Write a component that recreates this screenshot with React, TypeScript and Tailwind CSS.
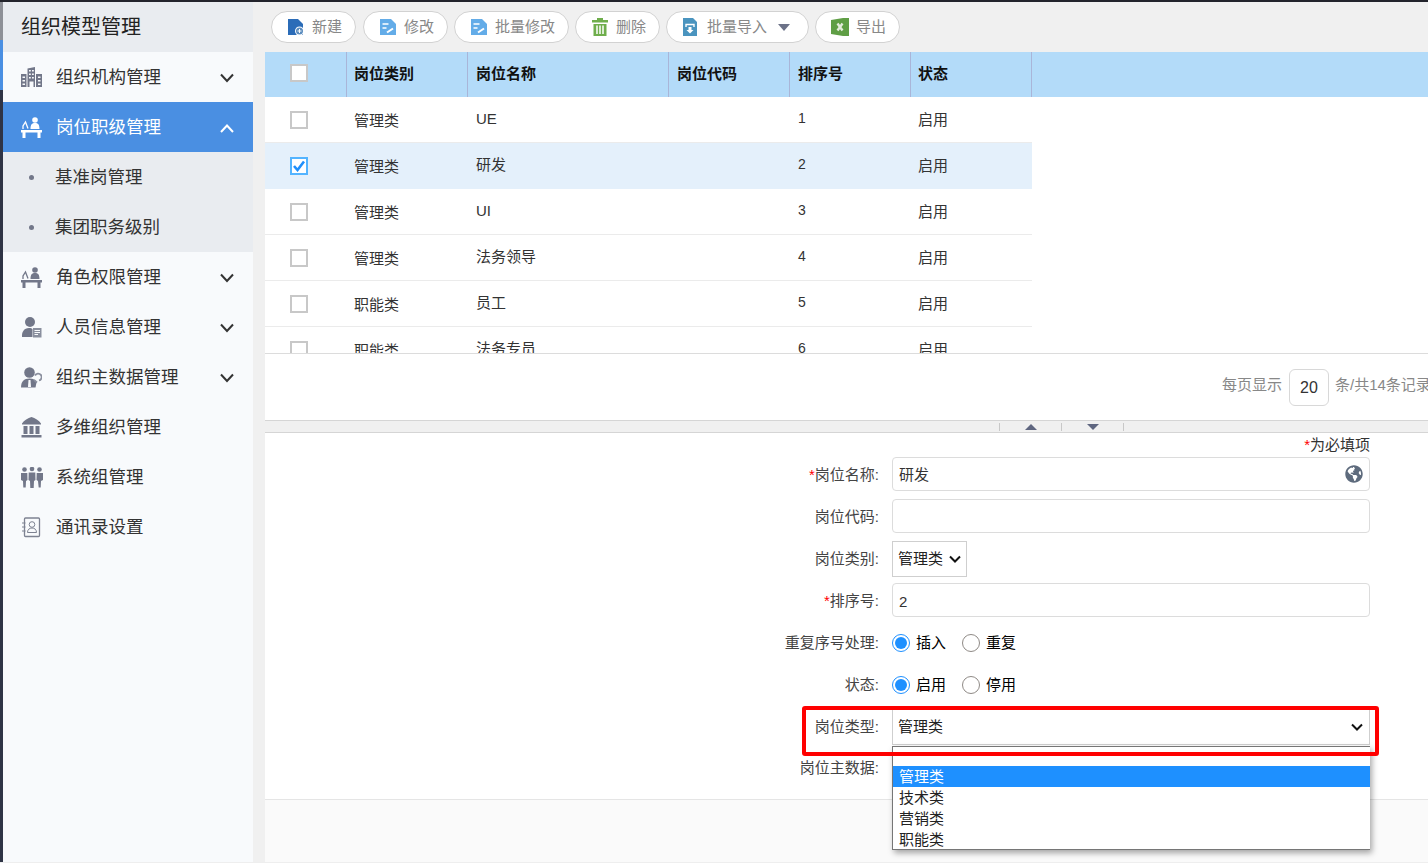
import { ReactNode } from "react";
import { FaGlobeAmericas } from "react-icons/fa";

const GRAY = "#727789";

const BuildingIcon = ({ c = GRAY }: { c?: string }) => (
  <svg width="21" height="21" viewBox="0 0 21 21">
    <path fill={c} d="M6.500 1.500L14 0v20H6.500zM0 7h5.500v13H0zM15 7h6v13h-6z" />
    <path fill="#f8fafc" d="M8 3h1.800v1.500H8zM11 3h1.800v1.500H11zM8 6.500h1.800V8H8zM11 6.500h1.800V8H11zM8 10h1.800v1.500H8zM11 10h1.800v1.500H11zM8.500 14.500h4V20h-4zM1.500 9.500h2.500V11H1.500zM1.500 13h2.500v1.500H1.500zM1.500 16.500h2.500V18H1.500zM17 9.500h2.500V11H17zM17 13h2.500v1.500H17zM17 16.500h2.500V18H17z" />
  </svg>
);

const DeskIcon = ({ c = GRAY }: { c?: string }) => (
  <svg width="21" height="21" viewBox="0 0 21 21">
    <circle cx="14" cy="3" r="2.800" fill={c} />
    <path fill={c} d="M9.500 12c0-4.500 1.500-6 4.500-6s4.500 1.500 4.500 6zM0 13h21v2.500h-1.500V21H16.500v-5.500h-12V21H1.500v-5.500H0z" />
    <path fill="none" stroke={c} strokeWidth="1.300" d="M2 12V9l2.500-4L7 11.500" />
  </svg>
);

const PersonCardIcon = () => (
  <svg width="21" height="21" viewBox="0 0 21 21">
    <circle cx="9" cy="5" r="5" fill={GRAY} />
    <path fill={GRAY} d="M1 20c-.5-5 2-9 7-9 2 0 3 .5 3.500 1v8z" />
    <rect x="12" y="11" width="8.500" height="9.500" fill="#8a8f9e" />
    <path stroke="#f8fafc" d="M13.500 13.500h5.500M13.500 15.500h5.500M13.500 17.500h3.500" />
  </svg>
);

const PersonLinkIcon = () => (
  <svg width="21" height="21" viewBox="0 0 21 21">
    <circle cx="8.500" cy="5.500" r="5.300" fill={GRAY} />
    <path fill={GRAY} d="M0 20.500c0-6 3-9 8.500-9 4 0 6 1.500 7 4l-1 5z" />
    <path fill="#f8fafc" d="M7.500 13h2l.5 7H7z" />
    <path fill="none" stroke="#8a8f9e" strokeWidth="1.800" d="M14 8.500a3.500 3.500 0 1 1 4 5M13 13l3 2.500" />
  </svg>
);

const BankIcon = () => (
  <svg width="21" height="21" viewBox="0 0 21 21">
    <path fill={GRAY} d="M10.500 0C14 1 18 3.500 20 6.500v1H1v-1C3 3.500 7 1 10.500 0zM2.500 9h4v8h-4zM8.500 9h4v8h-4zM14.500 9h4v8h-4zM.5 18h20v2.500H.5z" />
  </svg>
);

const GroupIcon = () => (
  <svg width="22" height="21" viewBox="0 0 22 21">
    <g fill={GRAY}>
      <circle cx="3.500" cy="2.500" r="2.300" />
      <circle cx="11" cy="2" r="2.300" />
      <circle cx="18.500" cy="2.500" r="2.300" />
      <path d="M0 6h6.300l.2 7-1.500 1 -.3 6.500H2.300L2 14 0 13zM7.700 5.500h6.600l.2 7.500-1.500 1-.3 7H9.300L9 14l-1.500-1zM15.700 6H22v7l-2 1-.3 6.500h-2L17 14l-1.500-1z" />
    </g>
  </svg>
);

const ContactIcon = () => (
  <svg width="20" height="21" viewBox="0 0 20 21">
    <rect x="3.500" y="1" width="15" height="18.500" rx="1" fill="none" stroke="#7d8291" strokeWidth="1.300" />
    <circle cx="11" cy="7.500" r="2.800" fill="none" stroke="#7d8291" />
    <path fill="none" stroke="#7d8291" d="M6.500 15.500c0-3 2-4.500 4.500-4.500s4.500 1.500 4.500 4.500zM1 6h3.500M1 10h3.500M1 14h3.500" />
  </svg>
);

const Chevron = ({ up, c = "#333" }: { up?: boolean; c?: string }) => (
  <svg className="mt-[2px]" width="16" height="10" viewBox="0 0 16 10" fill="none" stroke={c} strokeWidth="2">
    <path d={up ? "M2 9l6-6.500L14 9" : "M2 1.500L8 8l6-6.500"} />
  </svg>
);

const SelectArrow = () => (
  <svg width="12" height="8" viewBox="0 0 12 8" fill="none" stroke="#111" strokeWidth="2">
    <path d="M1 1.500l5 5 5-5" />
  </svg>
);

const NewIcon = () => (
  <svg width="18" height="18" viewBox="0 0 18 18">
    <path fill="#2b6cb8" d="M1 1h10l5 5v11H1z" />
    <circle cx="12.500" cy="13" r="4.500" fill="#fff" />
    <circle cx="12.500" cy="13" r="3.500" fill="#5b8cbe" />
    <path stroke="#fff" d="M12.500 11v4M10.500 13h4" />
  </svg>
);

const EditIcon = () => (
  <svg width="18" height="18" viewBox="0 0 18 18">
    <path fill="#63ace8" d="M1 1h11l5 5v11H1z" />
    <path stroke="#fff" strokeWidth="1.500" d="M3.500 6h6M3.500 10h4" />
    <path stroke="#fff" strokeWidth="2" d="M8 14.500l6-4" />
  </svg>
);

const TrashIcon = () => (
  <svg width="18" height="18" viewBox="0 0 18 18">
    <path fill="#6fae4c" d="M6 0h6v2h5v2.500H1V2h5zM2.500 6h13v12h-13z" />
    <path stroke="#fff" strokeWidth="1.500" d="M6 7.500V16M9 7.500V16M12 7.500V16" />
  </svg>
);

const ImportIcon = () => (
  <svg width="16" height="18" viewBox="0 0 16 18">
    <path fill="#4a94bf" d="M1 0h10l4 4v14H1z" />
    <path fill="none" stroke="#fff" strokeWidth="1.400" d="M4 9V6.500h8V9" />
    <path fill="#fff" d="M6.500 9h3v3h2L8 15.500 4.500 12h2z" />
  </svg>
);

const ExcelIcon = () => (
  <svg width="18" height="18" viewBox="0 0 18 18">
    <path fill="#5f9e45" d="M0 2l12-2h6v18h-6L0 16z" />
    <path stroke="#e4ebdc" strokeWidth="2.400" d="M6.500 5.500l5 7M11.500 5.500l-5 7" />
  </svg>
);

type NavItem = { label: string; icon: ReactNode; arrow?: boolean };

const navTop: NavItem = { label: "组织机构管理", icon: <BuildingIcon />, arrow: true };
const navRest: NavItem[] = [
  { label: "角色权限管理", icon: <DeskIcon />, arrow: true },
  { label: "人员信息管理", icon: <PersonCardIcon />, arrow: true },
  { label: "组织主数据管理", icon: <PersonLinkIcon />, arrow: true },
  { label: "多维组织管理", icon: <BankIcon /> },
  { label: "系统组管理", icon: <GroupIcon /> },
  { label: "通讯录设置", icon: <ContactIcon /> },
];

const NavRow = ({ item }: { item: NavItem }) => (
  <div className="h-[50px] flex items-center pl-[18px] pr-[18px] text-[17.500px] text-[#333]">
    <span className="w-[35px] flex items-center">{item.icon}</span>
    <span className="flex-1">{item.label}</span>
    {item.arrow && <Chevron />}
  </div>
);

const toolbar = [
  { label: "新建", icon: <NewIcon />, w: "w-[85px] mr-[1px]" },
  { label: "修改", icon: <EditIcon />, w: "w-[85px]" },
  { label: "批量修改", icon: <EditIcon />, w: "w-[115px]" },
  { label: "删除", icon: <TrashIcon />, w: "w-[85px]" },
  { label: "批量导入", icon: <ImportIcon />, w: "w-[143px]", caret: true },
  { label: "导出", icon: <ExcelIcon />, w: "w-[85px]" },
];

const rows = [
  { type: "管理类", name: "UE", code: "", no: 1 },
  { type: "管理类", name: "研发", code: "", no: 2, checked: true },
  { type: "管理类", name: "UI", code: "", no: 3 },
  { type: "管理类", name: "法务领导", code: "", no: 4 },
  { type: "职能类", name: "员工", code: "", no: 5 },
  { type: "职能类", name: "法务专员", code: "", no: 6 },
];

const Checkbox = ({ checked }: { checked?: boolean }) =>
  checked ? (
    <span className="w-[18px] h-[18px] border-2 border-[#53b4ff] bg-white flex items-center justify-center">
      <svg width="12" height="12" viewBox="0 0 12 12" fill="none" stroke="#1f8ffb" strokeWidth="2.600">
        <path d="M1 6l3.500 4L11 1.500" />
      </svg>
    </span>
  ) : (
    <span className="w-[18px] h-[18px] border-2 border-[#c8c8c8] bg-white block" />
  );

const Radio = ({ label, on }: { label: string; on?: boolean }) => (
  <span className="flex items-center w-[70px]">
    {on ? (
      <span className="w-[18px] h-[18px] rounded-full border-[1.500px] border-[#1e90ff] flex items-center justify-center">
        <span className="w-[12px] h-[12px] rounded-full bg-[#1e90ff]" />
      </span>
    ) : (
      <span className="w-[18px] h-[18px] rounded-full border-[1.500px] border-[#8f8a86]" />
    )}
    <span className="ml-[6px]">{label}</span>
  </span>
);

const FormRow = ({
  label,
  required,
  className,
  labelClass = "",
  children,
}: {
  label: string;
  required?: boolean;
  className: string;
  labelClass?: string;
  children?: ReactNode;
}) => (
  <div className={`flex items-center ${className}`}>
    <label className={`w-[614px] text-right text-[#444] shrink-0 ${labelClass}`}>
      {required && <span className="text-[#f00]">*</span>}
      {label}:
    </label>
    <div className="ml-[13px] flex-1 flex items-center">{children}</div>
  </div>
);

const inputClass =
  "w-full border border-[#dcdcdc] rounded-[4px] px-[6px] text-[15px] text-[#333] outline-none bg-white";

export default function App() {
  return (
    <div
      className="relative w-[1428px] h-[868px] overflow-hidden bg-white flex flex-col text-[15px]"
      style={{ fontFamily: '"Liberation Sans", "Noto Sans CJK SC", sans-serif' }}
    >
      <div className="h-[2px] bg-[#23242c] shrink-0" />
      <div className="flex h-[860px] shrink-0 overflow-hidden">
        {/* left strip */}
        <div className="w-[3px] flex flex-col shrink-0">
          <div className="h-[38px] bg-[#8d9097]" />
          <div className="h-[50px] bg-[#4a8fe2]" />
          <div className="flex-1 bg-[#2f3445]" />
        </div>

        {/* side nav */}
        <aside className="w-[250px] bg-[#f8fafc] shrink-0">
          <div className="h-[50px] bg-[#e9ecf0] flex items-center pl-[18px] text-[20px] text-[#222]">组织模型管理</div>
          <NavRow item={navTop} />
          <div className="h-[50px] bg-[#4a8fe2] flex items-center pl-[18px] pr-[18px] text-[17.500px] text-white">
            <span className="w-[35px] flex items-center">
              <DeskIcon c="#ffffff" />
            </span>
            <span className="flex-1">岗位职级管理</span>
            <Chevron up c="#ffffff" />
          </div>
          <div className="bg-[#e9ecf0] text-[17.500px] text-[#333]">
            {["基准岗管理", "集团职务级别"].map((s) => (
              <div key={s} className="h-[50px] flex items-center pl-[26px]">
                <span className="w-[5px] h-[5px] rounded-full bg-[#727789] mr-[21px]" />
                {s}
              </div>
            ))}
          </div>
          {navRest.map((n) => (
            <NavRow key={n.label} item={n} />
          ))}
        </aside>

        <div className="w-[12px] bg-[#f0f0f0] shrink-0" />

        <main className="flex-1 min-w-0 flex flex-col">
          {/* toolbar */}
          <div className="h-[50px] bg-[#f0f0f0] flex items-center gap-[6px] pl-[6px] shrink-0">
            {toolbar.map((b) => (
              <button
                key={b.label}
                className={`${b.w} h-[32px] rounded-full border border-[#d2d2d2] bg-white flex items-center pl-[15px] text-[15px] text-[#888]`}
              >
                <span className="w-[25px] flex items-center">{b.icon}</span>
                {b.label}
                {b.caret && (
                  <span className="ml-[11px] w-0 h-0 border-x-[6px] border-x-transparent border-t-[7px] border-t-[#6c7288]" />
                )}
              </button>
            ))}
          </div>

          {/* table */}
          <div className="h-[45px] bg-[#b3dbf9] flex shrink-0 font-bold text-[#111]">
            <div className="w-[82px] border-r border-[#a9b5d8] flex items-center pl-[25px] pb-[3px]">
              <Checkbox />
            </div>
            {[
              ["岗位类别", "w-[121px] pl-[7px]"],
              ["岗位名称", "w-[201px] pl-[8px]"],
              ["岗位代码", "w-[121px] pl-[8px]"],
              ["排序号", "w-[121px] pl-[8px]"],
              ["状态", "w-[121px] pl-[7px]"],
            ].map(([t, w]) => (
              <div key={t} className={`${w} border-r border-[#a9b5d8] flex items-center`}>
                {t}
              </div>
            ))}
          </div>
          <div className="h-[257px] overflow-hidden border-b border-[#dcdcdc] shrink-0">
            {rows.map((r) => (
              <div
                key={r.no}
                className={`w-[767px] h-[46px] flex items-center text-[#333] border-b ${
                  r.checked ? "bg-[#e4f0fb] border-[#e4f0fb]" : "border-[#ebebeb]"
                }`}
              >
                <div className="w-[82px] flex pl-[25px]">
                  <Checkbox checked={r.checked} />
                </div>
                <div className="w-[121px] pl-[7px] pt-[3px]">{r.type}</div>
                <div className="w-[201px] pl-[8px]">{r.name}</div>
                <div className="w-[121px] pl-[8px]">{r.code}</div>
                <div className="w-[121px] pl-[8px] text-[14px] pb-[2px]">{r.no}</div>
                <div className="w-[121px] pl-[7px] pt-[2px]">启用</div>
              </div>
            ))}
          </div>

          {/* pagination */}
          <div className="h-[66px] flex items-center shrink-0 whitespace-nowrap pl-[957px] text-[#888] pt-[1px]">
            <span className="mb-[4px] shrink-0">每页显示</span>
            <span className="ml-[7px] mr-[6px] w-[40px] h-[37px] shrink-0 border border-[#d8d8d8] rounded-[6px] flex items-center justify-center text-[16px] text-[#333]">
              20
            </span>
            <span className="mb-[4px] shrink-0">条/共14条记录</span>
          </div>

          {/* splitter */}
          <div className="h-[13px] bg-[#f0f0f0] border-y border-[#d5d5d5] flex pl-[734px] pt-[2px] shrink-0">
            <div className="w-[63px] h-[8px] border-x border-[#c8c8c8] flex justify-center pt-[1px]">
              <span className="w-0 h-0 border-x-[6px] border-x-transparent border-b-[6px] border-b-[#5f6680]" />
            </div>
            <div className="w-[62px] h-[8px] border-r border-[#c8c8c8] flex justify-center pt-[1px]">
              <span className="w-0 h-0 border-x-[6px] border-x-transparent border-t-[6px] border-t-[#5f6680]" />
            </div>
          </div>

          {/* form */}
          <div className="w-[1105px] h-[366px] shrink-0">
            <div className="h-[24px] text-right text-[#333] leading-[24px]">
              <span className="text-[#f00]">*</span>为必填项
            </div>
            <FormRow label="岗位名称" required className="h-[34px]" labelClass="pt-[2px]">
              <div className="relative w-full">
                <input readOnly value="研发" className={`${inputClass} h-[34px] pb-[2px]`} />
                <FaGlobeAmericas className="absolute right-[7px] top-[8px] text-[18px] text-[#5e6b7d]" />
              </div>
            </FormRow>
            <FormRow label="岗位代码" className="h-[34px] mt-[8px]" labelClass="pt-[2px]">
              <input readOnly value="" className={`${inputClass} h-[34px]`} />
            </FormRow>
            <FormRow label="岗位类别" className="h-[36px] mt-[8px]">
              <div className="w-[75px] h-[36px] border border-[#cfcfcf] flex items-center pl-[5px] text-[#222]">
                管理类
                <span className="ml-[6px] flex">
                  <SelectArrow />
                </span>
              </div>
            </FormRow>
            <FormRow label="排序号" required className="h-[34px] mt-[6px]" labelClass="pt-[2px]">
              <input readOnly value="2" className={`${inputClass} h-[34px] pt-[2px]`} />
            </FormRow>
            <FormRow label="重复序号处理" className="h-[42px] mt-[5px]">
              <Radio label="插入" on />
              <Radio label="重复" />
            </FormRow>
            <FormRow label="状态" className="h-[42px]">
              <Radio label="启用" on />
              <Radio label="停用" />
            </FormRow>
            <FormRow label="岗位类型" className="h-[36px] mt-[3px]">
              <div className="w-full h-[36px] border border-[#cfcfcf] flex items-center justify-between pl-[5px] pr-[6px] text-[#222]">
                管理类
                <SelectArrow />
              </div>
            </FormRow>
            <FormRow label="岗位主数据" className="h-[46px]" />
          </div>

          {/* footer */}
          <div className="h-[63px] bg-[#fafafa] border-t border-[#e5e5e5] shrink-0" />
        </main>
      </div>
      <div className="flex-1 bg-white border-t border-[#eeeeee]" />

      {/* open select options */}
      <div className="absolute left-[892px] top-[746px] w-[478px] h-[104px] bg-white border-y border-l border-[#767676] shadow-[2px_3px_6px_rgba(0,0,0,0.35)] text-[15px] text-[#222] leading-[21px]">
        <div className="h-[19px]" />
        <div className="h-[21px] pl-[6px] bg-[#1e90ff] text-white">管理类</div>
        <div className="h-[21px] pl-[6px]">技术类</div>
        <div className="h-[21px] pl-[6px]">营销类</div>
        <div className="h-[21px] pl-[6px]">职能类</div>
      </div>

      {/* red annotation box */}
      <div className="absolute left-[802px] top-[706px] w-[577px] h-[50px] border-4 border-[#ff0000] rounded-[3px] pointer-events-none" />
    </div>
  );
}
